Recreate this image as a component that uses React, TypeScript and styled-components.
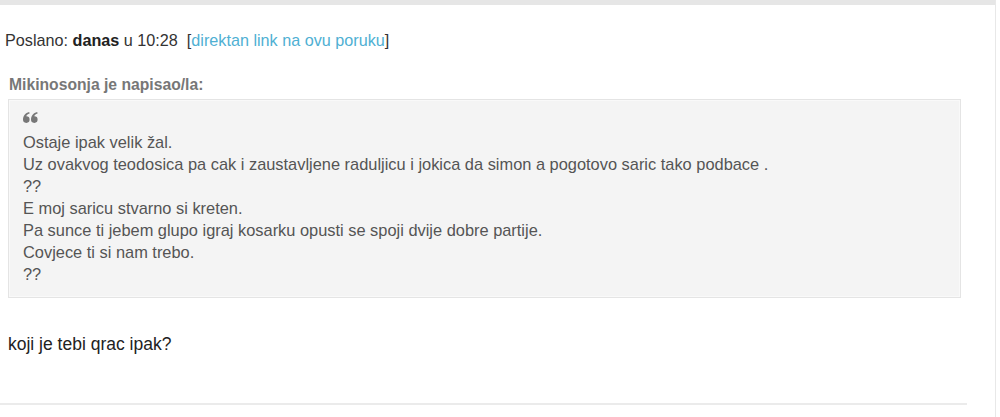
import React from "react";
import styled, { createGlobalStyle } from "styled-components";

const Global = createGlobalStyle`
  html, body { margin: 0; padding: 0; background: #fff; }
  body { font-family: "Liberation Sans", Arial, sans-serif; }
`;

const Page = styled.div`
  width: 996px;
  height: 417px;
  border-right: 1px solid #e8e8e8;
  box-sizing: border-box;
  display: flex;
  flex-direction: column;
`;

const TopBar = styled.div`
  height: 5px;
  background: #e6e6e6;
`;

const Post = styled.div`
  padding: 24px 0 0 5px;
  flex: 1;
  display: flex;
  flex-direction: column;
`;

const Meta = styled.div`
  font-size: 16.2px;
  color: #333;
  line-height: 22px;
`;

const Strong = styled.b`
  font-weight: bold;
  color: #222;
`;

const Link = styled.a`
  color: #4fb0d3;
  text-decoration: none;
`;

const QuoteWrap = styled.div`
  margin: 24px 0 0 3px;
  width: 953px;
`;

const QuoteAuthor = styled.div`
  font-size: 15.7px;
  font-weight: bold;
  color: #777;
  line-height: 20px;
  margin: 0 0 4px 1px;
`;

const QuoteBox = styled.blockquote`
  margin: 0;
  background: #f4f4f4;
  border: 1px solid #e4e4e4;
  box-shadow: inset 0 0 0 1px #f9f9f9;
  padding: 12px 14px 12px 14px;
  font-size: 16.4px;
  line-height: 22px;
  color: #555;
`;

const QuoteMark = styled.svg`
  display: block;
  width: 15px;
  height: 11px;
  margin: 0 0 8px 0;
  fill: #777;
`;

const Line = styled.div``;

const Body = styled.div`
  margin: 35px 0 0 3px;
  font-size: 17.5px;
  color: #222;
  line-height: 22px;
`;

const Divider = styled.div`
  margin-top: auto;
  margin-bottom: 12px;
  width: 967px;
  margin-left: -5px;
  height: 2px;
  background: #ebebeb;
`;

const lines = [
  "Ostaje ipak velik žal.",
  "Uz ovakvog teodosica pa cak i zaustavljene raduljicu i jokica da simon a pogotovo saric tako podbace .",
  "??",
  "E moj saricu stvarno si kreten.",
  "Pa sunce ti jebem glupo igraj kosarku opusti se spoji dvije dobre partije.",
  "Covjece ti si nam trebo.",
  "??",
];

export default function App() {
  return (
    <>
      <Global />
      <Page>
        <TopBar />
        <Post>
          <Meta>
            Poslano: <Strong>danas</Strong> u 10:28&nbsp; [<Link href="#">direktan link na ovu poruku</Link>]
          </Meta>
          <QuoteWrap>
            <QuoteAuthor>Mikinosonja je napisao/la:</QuoteAuthor>
            <QuoteBox>
              <QuoteMark viewBox="0 0 15 11">
                <path d="M3.3 4.3a3.3 3.3 0 1 1 0 6.6a3.3 3.3 0 0 1-3.3-3.3C0 3.9 2.4 1 6.2 0.1l0.4 1.3C4.6 2 3.4 3.1 3.3 4.3z" />
                <path d="M11.3 4.3a3.3 3.3 0 1 1 0 6.6a3.3 3.3 0 0 1-3.3-3.3C8 3.9 10.4 1 14.2 0.1l0.4 1.3C12.6 2 11.4 3.1 11.3 4.3z" />
              </QuoteMark>
              {lines.map((l, i) => (
                <Line key={i}>{l}</Line>
              ))}
            </QuoteBox>
          </QuoteWrap>
          <Body>koji je tebi qrac ipak?</Body>
          <Divider />
        </Post>
      </Page>
    </>
  );
}
